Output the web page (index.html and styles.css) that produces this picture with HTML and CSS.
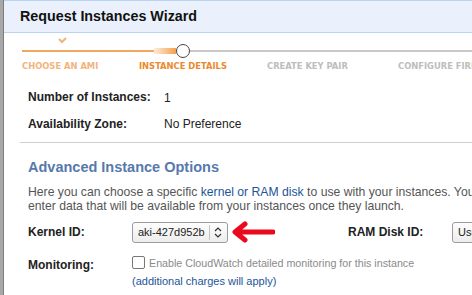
FILE: index.html
```html
<!doctype html>
<html>
  <head>
    <meta charset="utf-8">
    <title>Request Instances Wizard</title>
    <link rel="stylesheet" href="styles.css">
  </head>
  <body>
    <div class="dialog">
      <div class="header">
        <h1>Request Instances Wizard</h1>
      </div>

      <div class="steps">
        <div class="marks">
          <svg class="check" width="9" height="7" viewBox="0 0 9 7">
            <path d="M1 2 L4 5 L8 1" fill="none" stroke="#f2b27a" stroke-width="2"/>
          </svg>
        </div>
        <div class="track">
          <span class="done"></span>
          <span class="glow"></span>
          <span class="dot"></span>
          <span class="todo"></span>
        </div>
        <ul class="labels">
          <li class="past">CHOOSE AN AMI</li>
          <li class="current">INSTANCE DETAILS</li>
          <li>CREATE KEY PAIR</li>
          <li>CONFIGURE FIREWALL</li>
        </ul>
      </div>

      <div class="content summary">
        <div class="row info">
          <label>Number of Instances:</label>
          <span class="num">1</span>
        </div>
        <div class="row info">
          <label>Availability Zone:</label>
          <span>No Preference</span>
        </div>
      </div>

      <hr>

      <div class="content">
        <h2>Advanced Instance Options</h2>
        <p>Here you can choose a specific <a href="#">kernel or RAM disk</a> to use with your instances. You can also enter data that will be available from your instances once they launch.</p>

        <div class="row field">
          <label>Kernel ID:</label>
          <div class="select">
            <span class="value">aki-427d952b</span>
            <span class="spin">
              <svg width="8" height="11" viewBox="0 0 8 11">
                <path d="M1 4 L4 1 L7 4 M1 7 L4 10 L7 7" fill="none" stroke="#333" stroke-width="1.2"/>
              </svg>
            </span>
          </div>
          <svg class="arrow" width="44" height="22" viewBox="0 0 44 22">
            <path d="M42 11 L5 11 M14 3 L4 11 L14 19" fill="none" stroke="#ea0a1e" stroke-width="5" stroke-linecap="round" stroke-linejoin="round"/>
          </svg>
          <label class="ram">RAM Disk ID:</label>
          <div class="select short"><span class="value">Use Default</span></div>
        </div>

        <div class="row field monitor">
          <label>Monitoring:</label>
          <div class="opts">
            <div class="check-line">
              <span class="box"></span>
              <span>Enable CloudWatch detailed monitoring for this instance</span>
            </div>
            <a href="#">(additional charges will apply)</a>
          </div>
        </div>
      </div>
    </div>
  </body>
</html>
```

FILE: styles.css
```css
html, body {
    margin: 0;
    height: 100%;
    overflow: hidden;
}
body {
    font: 12px "Liberation Sans", Arial, sans-serif;
    color: #222;
    background: #fff;
    border-left: 3px solid #a8a8a8;
}
.dialog {
    border-left: 1px solid #7c7c7c;
    height: 100%;
    width: 600px;
}
.header {
    background: #eaf1fc;
    border-top: 1px solid #b7d4f1;
    border-bottom: 1px solid #b7d4f1;
    height: 31px;
    padding-left: 16px;
}
.header h1 {
    margin: 0;
    font-size: 14.3px;
    line-height: 31px;
    color: #111;
}

/* wizard progress */
.steps {
    padding-left: 18px;
}
.marks {
    height: 7px;
    padding-top: 4px;
    padding-left: 36px;
}
.check {
    display: block;
}
.track {
    display: flex;
    align-items: center;
    height: 13px;
}
.track .done {
    width: 132px;
    height: 2px;
    background: #f0a860;
}
.track .glow {
    width: 22px;
    height: 6px;
    background: linear-gradient(to right, rgba(244, 160, 80, 0.2), rgba(244, 150, 60, 0.9));
}
.track .dot {
    width: 12px;
    height: 12px;
    border: 1.5px solid #444;
    border-radius: 50%;
    background: #fff;
}
.track .todo {
    flex: 1;
    height: 2px;
    background: #c8c8c8;
}
.labels {
    display: flex;
    list-style: none;
    margin: 3px 0 0;
    padding: 0;
    font: bold 9.3px/11px "DejaVu Sans Condensed", "DejaVu Sans", sans-serif;
    color: #bdbdbd;
}
.labels li {
    width: 117px;
    white-space: nowrap;
}
.labels li:nth-child(2) {
    width: 128px;
}
.labels li:nth-child(3) {
    width: 131px;
}
.labels .past {
    color: #f1b47c;
}
.labels .current {
    color: #ea8a30;
}

/* form */
.content {
    padding-left: 24px;
}
.summary {
    padding-top: 12px;
}
.row {
    display: flex;
    align-items: center;
}
.row label {
    font-weight: bold;
    width: 136px;
    flex: none;
}
.info {
    height: 27px;
}
.info .num {
    padding-top: 3px;
}
hr {
    border: 0;
    border-top: 1px solid #cfcfcf;
    margin: 5px 0 0 16px;
}
h2 {
    margin: 16px 0 0;
    font-size: 14.5px;
    color: #5679ad;
}
p {
    margin: 10px 0 0;
    color: #555;
    line-height: 14px;
    font-size: 12.2px;
    width: 500px;
}
a {
    color: #1d5597;
    text-decoration: none;
}
.field {
    margin-top: 7px;
    height: 24px;
}
.field label {
    width: 104px;
}
.select {
    display: flex;
    align-items: center;
    height: 19px;
    width: 94px;
    border: 1px solid #9c9c9c;
    border-radius: 3px;
    background: linear-gradient(#fdfdfd, #ededed);
    font-size: 11px;
    flex: none;
}
.select .value {
    padding-left: 5px;
    flex: 1;
    white-space: nowrap;
    overflow: hidden;
}
.select .spin {
    border-left: 1px solid #c4c4c4;
    height: 15px;
    padding: 0 5px 0 4px;
    display: flex;
    align-items: center;
}
.arrow {
    margin-left: 3px;
    flex: none;
}
.row label.ram {
    margin-left: 73px;
    width: 104px;
}
.select.short {
    width: 60px;
}
.monitor {
    align-items: flex-start;
    margin-top: 12px;
}
.monitor label {
    padding-top: 2px;
}
.check-line {
    display: flex;
    align-items: center;
    color: #8a8a8a;
    font-size: 10.7px;
}
.box {
    width: 11px;
    height: 11px;
    border: 1px solid #777;
    border-radius: 2px;
    margin-right: 4px;
    background: #fff;
}
.opts a {
    display: block;
    font-size: 11px;
    margin-top: 6px;
}
```
